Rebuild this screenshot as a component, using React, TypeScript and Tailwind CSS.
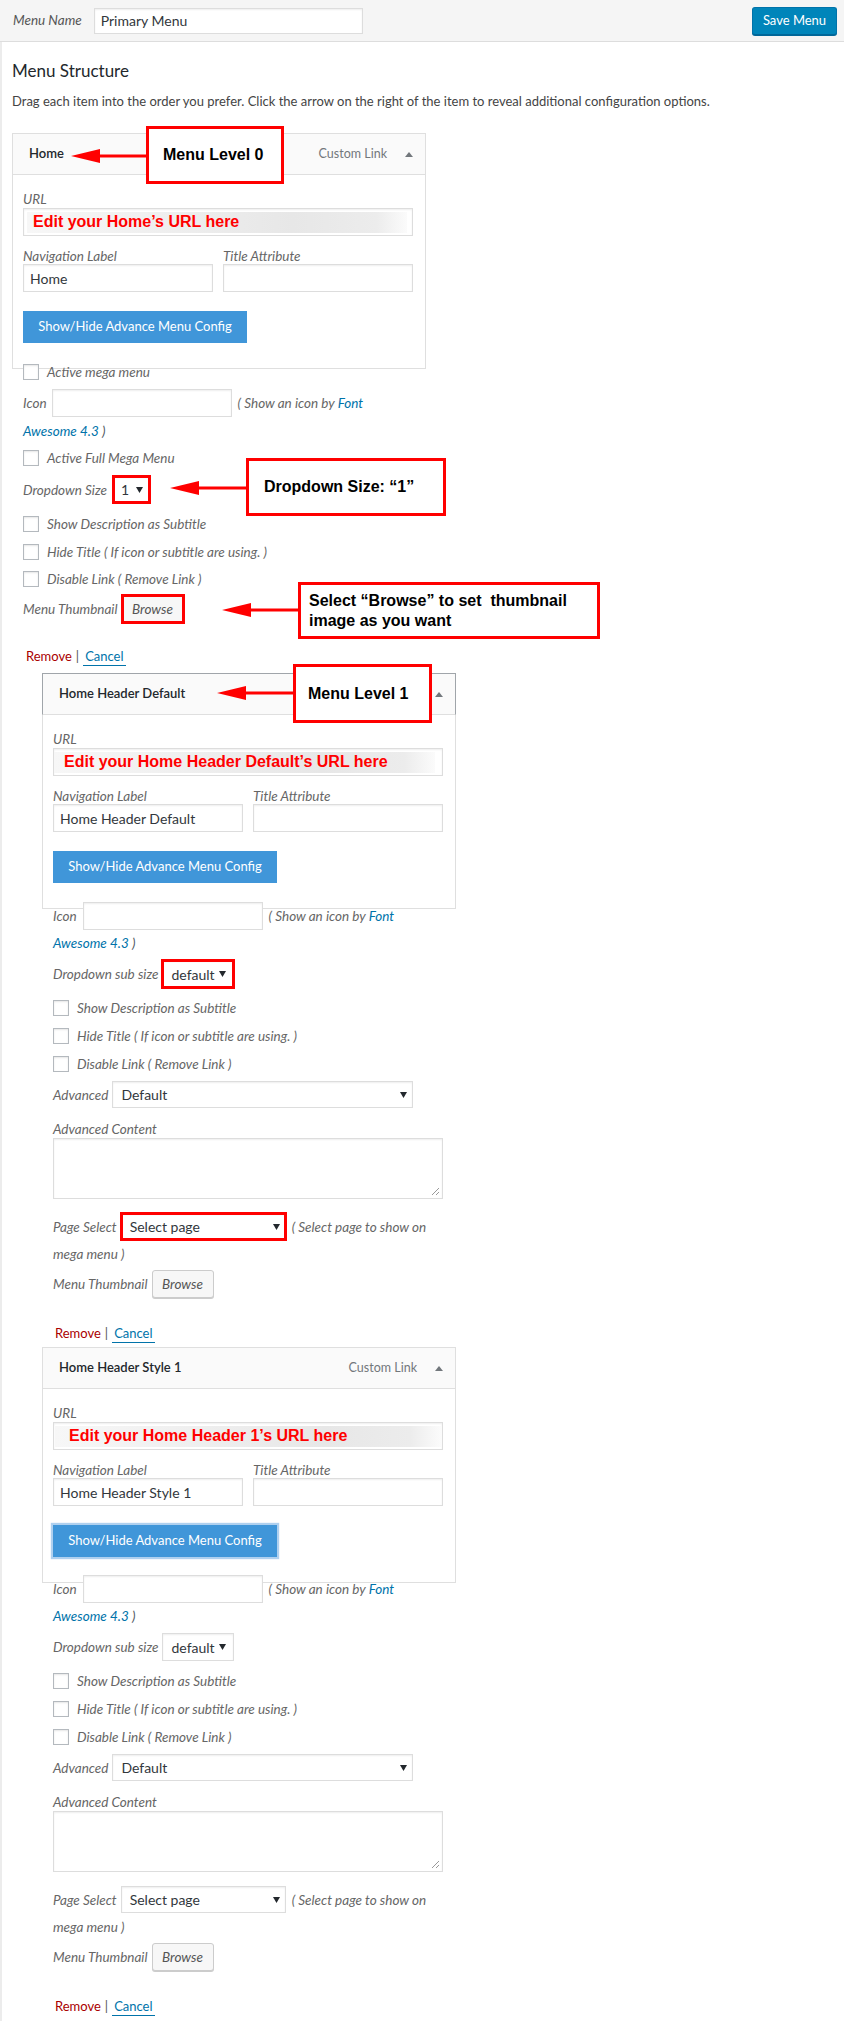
import React from "react";

const UI = "font-['Lato',sans-serif]";
const ANN = "font-['Liberation_Sans',Arial,sans-serif]";
const lbl = "italic text-[13.5px] text-[#666] leading-[16px] whitespace-nowrap";
const link = "text-[#0073aa]";

function Caret() {
  return (
    <svg width="7" height="6" viewBox="0 0 7 6" className="shrink-0">
      <polygon points="0,0 7,0 3.5,6" fill="#23282d" />
    </svg>
  );
}

function Field({ className = "", children }: { className?: string; children?: React.ReactNode }) {
  return (
    <div className={`border border-[#dddddd] bg-white shadow-[inset_0_1px_2px_rgba(0,0,0,0.07)] ${className}`}>
      {children}
    </div>
  );
}

function Select({ value, className = "" }: { value: string; className?: string }) {
  return (
    <Field className={`flex items-center justify-between text-[14px] text-[#32373c] ${className}`}>
      <span>{value}</span>
      <Caret />
    </Field>
  );
}

// red annotation frame drawn over a control
function RedBox({ children }: { children: React.ReactNode }) {
  return (
    <div className="relative">
      {children}
      <div className="absolute -inset-px border-[3px] border-[#ff0000]" />
    </div>
  );
}

function Checkbox() {
  return <span className="block w-4 h-4 shrink-0 border border-[#b4b9be] bg-white shadow-[inset_0_1px_2px_rgba(0,0,0,0.1)]" />;
}

function CheckRow({ label, className = "" }: { label: string; className?: string }) {
  return (
    <div className={`flex items-center h-4 ${className}`}>
      <Checkbox />
      <span className={`ml-2 ${lbl}`}>{label}</span>
    </div>
  );
}

function Browse() {
  return (
    <div className="w-[62px] h-[28px] flex items-center justify-center rounded-[3px] border border-[#cccccc] bg-[#f7f7f7] shadow-[0_1px_0_#cccccc] italic text-[13.5px] text-[#555]">
      Browse
    </div>
  );
}

function RemoveCancel({ className = "" }: { className?: string }) {
  return (
    <div className={`ml-[2px] h-[18px] flex items-start text-[13px] leading-[17px] ${className}`}>
      <span className="text-[#aa0000]">Remove</span>
      <span className="mx-[4px] text-[#555]">|</span>
      <span className="px-[2px] text-[#0073aa] border-b border-[#0073aa]">Cancel</span>
    </div>
  );
}

function IconRow({ className = "", gap }: { className?: string; gap: string }) {
  return (
    <div className={`flex items-center h-[28px] ${className}`}>
      <span className={lbl}>Icon</span>
      <Field className={`${gap} w-[180px] h-[28px] shrink-0`} />
      <span className={`ml-[6px] ${lbl}`}>
        ( Show an icon by <span className={link}>Font</span>
      </span>
    </div>
  );
}

function Awesome({ className = "" }: { className?: string }) {
  return (
    <div className={`italic text-[13.5px] leading-[18px] ${className}`}>
      <span className={link}>Awesome 4.3</span>
      <span className="text-[#50575e]"> )</span>
    </div>
  );
}

function CardHeader({ title, dark, type = true }: { title: string; dark?: boolean; type?: boolean }) {
  return (
    <div
      className={`flex items-center h-[42px] border bg-[#fafafa] pl-[16px] pr-[12px] ${
        dark ? "border-[#a0a5aa] border-b-[#dfdfdf]" : "border-[#dfdfdf]"
      }`}
    >
      <span className="font-semibold text-[13px] text-[#23282d]">{title}</span>
      {type && <span className="ml-auto text-[12.5px] text-[#72777c]">Custom Link</span>}
      <svg width="8" height="5" viewBox="0 0 8 5" className={type ? "ml-[18px]" : "ml-auto"}>
        <polygon points="0,5 4,0 8,5" fill="#72777c" />
      </svg>
    </div>
  );
}

function Card({
  title,
  dark,
  url,
  urlBand,
  navLabel,
  focused,
  type = true,
}: {
  title: string;
  dark?: boolean;
  url: string;
  urlBand: string;
  navLabel: string;
  focused?: boolean;
  type?: boolean;
}) {
  return (
    <div className="w-[414px]">
      <CardHeader title={title} dark={dark} type={type} />
      <div className="border-x border-b border-[#dfdfdf] pt-[16px] pl-[10px] pr-[12px] pb-[25px]">
        <div className={lbl}>URL</div>
        <Field className="mt-[1px] h-[28px] flex items-center">
          <div
            className={`h-[21px] flex items-center bg-[linear-gradient(90deg,#f7f7f7_0%,#efefef_35%,#e7e7e7_70%,#ececec_92%,#fbfbfb_100%)] ${urlBand}`}
          >
            <span className={`${ANN} font-bold text-[16px] text-[#ff0000] whitespace-nowrap`}>{url}</span>
          </div>
        </Field>
        <div className="mt-[12px] grid grid-cols-2 gap-x-[10px]">
          <div className={lbl}>Navigation Label</div>
          <div className={lbl}>Title Attribute</div>
          <Field className="h-[28px] flex items-center pl-[6px] text-[14px] text-[#32373c]">{navLabel}</Field>
          <Field className="h-[28px]" />
        </div>
        <div
          className={`mt-[19px] w-[224px] h-[32px] flex items-center justify-center bg-[#4096d9] text-white text-[13px] ${
            focused ? "shadow-[0_0_1px_2px_rgba(110,170,225,0.55)]" : ""
          }`}
        >
          Show/Hide Advance Menu Config
        </div>
      </div>
    </div>
  );
}

function LevelOneSettings({ annotated, className = "" }: { annotated?: boolean; className?: string }) {
  const subSize = <Select value="default" className="w-[72px] h-[28px] pl-[8px] pr-[7px]" />;
  const pageSel = <Select value="Select page" className="w-[165px] h-[27px] pl-[8px] pr-[5px]" />;
  return (
    <div className={`relative pl-[11px] ${className}`}>
      <IconRow gap="ml-[6px]" />
      <Awesome className="mt-[4px]" />
      <div className="mt-[8px] flex items-center h-[28px]">
        <span className={lbl}>Dropdown sub size</span>
        <div className="ml-[4px]">{annotated ? <RedBox>{subSize}</RedBox> : subSize}</div>
      </div>
      <CheckRow className="mt-[12px]" label="Show Description as Subtitle" />
      <CheckRow className="mt-[12px]" label="Hide Title ( If icon or subtitle are using. )" />
      <CheckRow className="mt-[12px]" label="Disable Link ( Remove Link )" />
      <div className="mt-[9px] flex items-center h-[27px]">
        <span className={lbl}>Advanced</span>
        <Select value="Default" className="ml-[4px] w-[301px] h-[27px] pl-[8px] pr-[5px]" />
      </div>
      <div className={`mt-[13px] ${lbl}`}>Advanced Content</div>
      <Field className="relative mt-[1px] w-[390px] h-[61px]">
        <svg width="9" height="9" viewBox="0 0 9 9" className="absolute right-[2px] bottom-[2px]">
          <line x1="1" y1="8" x2="8" y2="1" stroke="#999" strokeWidth="1" />
          <line x1="5" y1="8" x2="8" y2="5" stroke="#999" strokeWidth="1" />
        </svg>
      </Field>
      <div className="mt-[14px] flex items-center h-[27px]">
        <span className={lbl}>Page Select</span>
        <div className="ml-[4px]">{annotated ? <RedBox>{pageSel}</RedBox> : pageSel}</div>
        <span className={`ml-[6px] ${lbl}`}>( Select page to show on</span>
      </div>
      <div className="mt-[5px] italic text-[13.5px] leading-[18px] text-[#666]">mega menu )</div>
      <div className="mt-[7px] flex items-center h-[28px]">
        <span className={lbl}>Menu Thumbnail</span>
        <div className="ml-[4px]">
          <Browse />
        </div>
      </div>
      <RemoveCancel className="mt-[27px]" />
    </div>
  );
}

export default function App() {
  return (
    <div className={`relative w-full min-h-[2021px] bg-white ${UI}`}>
      {/* top bar */}
      <header className="h-[42px] bg-[#f5f5f5] border-b border-[#dddddd] flex items-center justify-between pl-[13px] pr-[7px]">
        <div className="flex items-center">
          <span className="italic text-[13.5px] text-[#555]">Menu Name</span>
          <Field className="ml-[12px] w-[269px] h-[26px] flex items-center pl-[6px] text-[14px] text-[#32373c]">
            Primary Menu
          </Field>
        </div>
        <button className="w-[85px] h-[28px] rounded-[3px] bg-[#0085ba] border border-[#0073aa] border-b-[#006799] shadow-[0_1px_0_#006799] text-white text-[13px]">
          Save Menu
        </button>
      </header>

      <div className="border-l-2 border-[#ececec] pb-[5px]">
        <h3 className="pt-[17px] pl-[10px] text-[17px] leading-[24px] text-[#23282d]">Menu Structure</h3>
        <p className="mt-[8px] pl-[10px] text-[13px] leading-[20px] text-[#444]">
          Drag each item into the order you prefer. Click the arrow on the right of the item to reveal additional
          configuration options.
        </p>

        {/* Level 0 item */}
        <div className="mt-[22px] ml-[10px]">
          <Card title="Home" url="Edit your Home’s URL here" urlBand="ml-[3px] mr-[5px] flex-1 pl-[6px]" navLabel="Home" />
          <div className="relative -mt-[5px] pl-[11px]">
            <CheckRow label="Active mega menu" />
            <IconRow className="mt-[9px]" gap="ml-[5px]" />
            <Awesome className="mt-[5px]" />
            <CheckRow className="mt-[10px]" label="Active Full Mega Menu" />
            <div className="mt-[10px] flex items-center h-[27px]">
              <span className={lbl}>Dropdown Size</span>
              <div className="ml-[6px]">
                <RedBox>
                  <Select value="1" className="w-[37px] h-[27px] pl-[7px] pr-[6px]" />
                </RedBox>
              </div>
            </div>
            <CheckRow className="mt-[13px]" label="Show Description as Subtitle" />
            <CheckRow className="mt-[12px]" label="Hide Title ( If icon or subtitle are using. )" />
            <CheckRow className="mt-[11px]" label="Disable Link ( Remove Link )" />
            <div className="mt-[8px] flex items-center h-[28px]">
              <span className={lbl}>Menu Thumbnail</span>
              <div className="ml-[4px]">
                <RedBox>
                  <Browse />
                </RedBox>
              </div>
            </div>
            <RemoveCancel className="mt-[25px] ml-[3px]" />
          </div>
        </div>

        {/* Level 1 items */}
        <div className="mt-[7px] ml-[40px]">
          <Card
            title="Home Header Default"
            dark
            type={false}
            url="Edit your Home Header Default’s URL here"
            urlBand="mr-[7px] flex-1 pl-[10px]"
            navLabel="Home Header Default"
          />
          <LevelOneSettings annotated className="-mt-[7px]" />
        </div>

        <div className="mt-[4px] ml-[40px]">
          <Card
            title="Home Header Style 1"
            url="Edit your Home Header 1’s URL here"
            urlBand="ml-px mr-px flex-1 pl-[14px]"
            navLabel="Home Header Style 1"
            focused
          />
          <LevelOneSettings className="-mt-[8px]" />
        </div>
      </div>

      {/* annotations */}
      <svg width="77" height="16" viewBox="0 0 77 16" className="absolute left-[70px] top-[148px]">
        <polygon points="1,8 30,1 30,15" fill="#ff0000" />
        <rect x="29" y="6.5" width="48" height="3" fill="#ff0000" />
      </svg>
      <div className={`absolute left-[146px] top-[126px] w-[138px] h-[58px] border-[3px] border-[#ff0000] bg-white flex items-center pl-[14px] ${ANN} font-bold text-[16px] text-black`}>
        Menu Level 0
      </div>

      <svg width="77" height="16" viewBox="0 0 77 16" className="absolute left-[169px] top-[480px]">
        <polygon points="1,8 30,1 30,15" fill="#ff0000" />
        <rect x="29" y="6.5" width="48" height="3" fill="#ff0000" />
      </svg>
      <div className={`absolute left-[246px] top-[458px] w-[200px] h-[58px] border-[3px] border-[#ff0000] bg-white flex items-center pl-[15px] ${ANN} font-bold text-[16px] text-black`}>
        Dropdown Size: “1”
      </div>

      <svg width="77" height="16" viewBox="0 0 77 16" className="absolute left-[221px] top-[602px]">
        <polygon points="1,8 30,1 30,15" fill="#ff0000" />
        <rect x="29" y="6.5" width="48" height="3" fill="#ff0000" />
      </svg>
      <div className={`absolute left-[298px] top-[582px] w-[302px] h-[57px] border-[3px] border-[#ff0000] bg-white flex flex-col justify-center pl-[8px] ${ANN} font-bold text-[16px] leading-[20px] text-black`}>
        <span className="whitespace-pre">Select “Browse” to set  thumbnail</span>
        <span>image as you want</span>
      </div>

      <svg width="77" height="16" viewBox="0 0 77 16" className="absolute left-[216px] top-[685px]">
        <polygon points="1,8 30,1 30,15" fill="#ff0000" />
        <rect x="29" y="6.5" width="48" height="3" fill="#ff0000" />
      </svg>
      <div className={`absolute left-[293px] top-[664px] w-[139px] h-[59px] border-[3px] border-[#ff0000] bg-white flex items-center pl-[12px] ${ANN} font-bold text-[16px] text-black`}>
        Menu Level 1
      </div>
    </div>
  );
}
